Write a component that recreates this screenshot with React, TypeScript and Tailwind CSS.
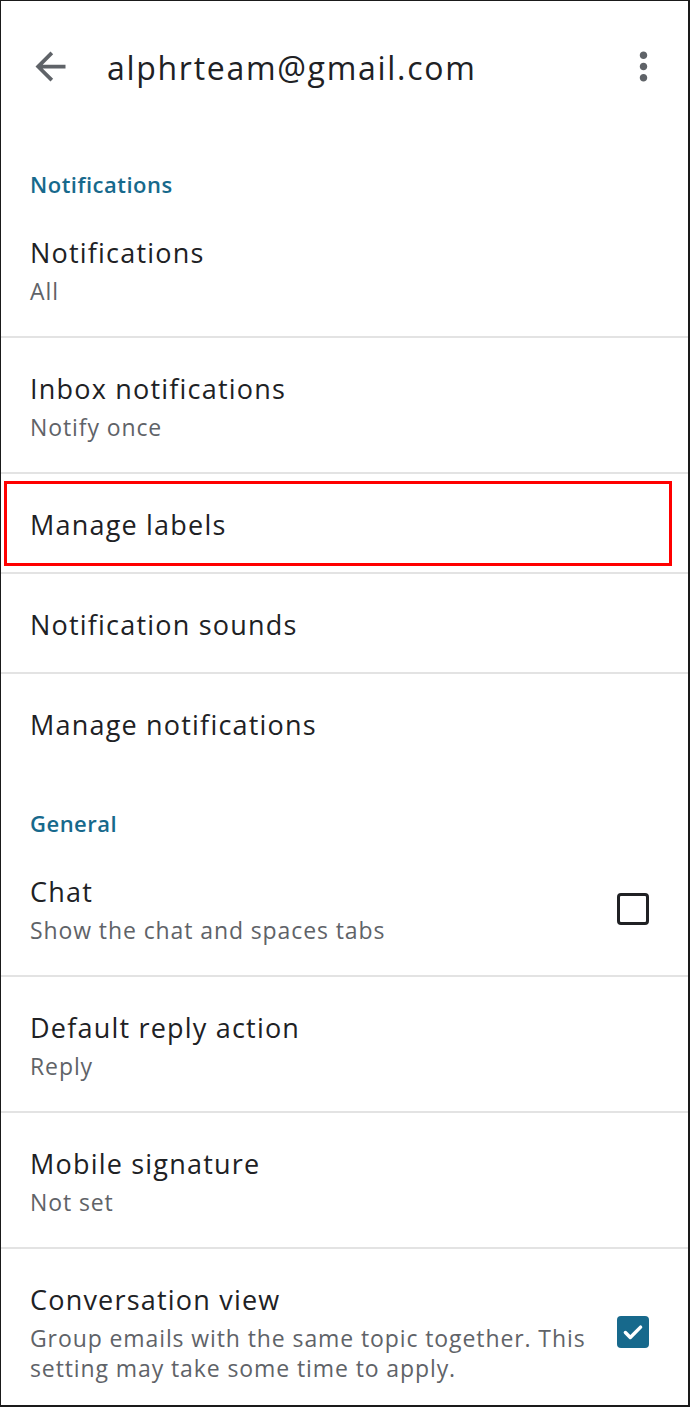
import React from 'react';

type Row = {
  title: string;
  subtitle?: string;
  checkbox?: 'on' | 'off';
  divider?: boolean;
  highlight?: boolean;
};

const notificationRows: Row[] = [
  { title: 'Notifications', subtitle: 'All', divider: true },
  { title: 'Inbox notifications', subtitle: 'Notify once', divider: true },
  { title: 'Manage labels', divider: true, highlight: true },
  { title: 'Notification sounds', divider: true },
  { title: 'Manage notifications' },
];

const generalRows: Row[] = [
  { title: 'Chat', subtitle: 'Show the chat and spaces tabs', checkbox: 'off', divider: true },
  { title: 'Default reply action', subtitle: 'Reply', divider: true },
  { title: 'Mobile signature', subtitle: 'Not set', divider: true },
  {
    title: 'Conversation view',
    subtitle: 'Group emails with the same topic together. This setting may take some time to apply.',
    checkbox: 'on',
  },
];

function Checkbox({ checked }: { checked: boolean }) {
  if (checked) {
    return (
      <div className="w-[32px] h-[32px] rounded-[4px] bg-[#17698c] flex items-center justify-center shrink-0">
        <svg viewBox="0 0 24 24" className="w-[26px] h-[26px]" fill="none" stroke="#fff" strokeWidth="3.2" strokeLinecap="round" strokeLinejoin="round">
          <path d="M5 12.5l4.5 4.5L19 7.5" />
        </svg>
      </div>
    );
  }
  return <div className="w-[32px] h-[32px] rounded-[4px] border-[3.5px] border-[#202124] shrink-0" />;
}

function SettingRow({ row }: { row: Row }) {
  return (
    <div className={`relative ${row.divider ? 'border-b-2 border-[#e3e3e3]' : ''}`}>
      <div className={`flex items-center pl-[29px] pr-[39px] pt-[31px] ${row.subtitle ? 'pb-[30px]' : 'pb-[27px]'}`}>
        <div className="flex-1 pr-[30px]">
          <div className="text-[27px] leading-[40px] tracking-[1.2px] text-[#202124]">{row.title}</div>
          {row.subtitle && (
            <div className="mt-[3px] text-[23px] leading-[30px] tracking-[0.9px] text-[#5f6368]">{row.subtitle}</div>
          )}
        </div>
        {row.checkbox && <Checkbox checked={row.checkbox === 'on'} />}
      </div>
      {/* annotation box */}
      {row.highlight && (
        <div className="absolute left-[3px] right-[16px] top-[7px] bottom-[6px] border-[3px] border-[#f00]" />
      )}
    </div>
  );
}

export default function App() {
  return (
    <div
      className="w-[690px] h-[1407px] bg-white border-t border-l border-r-2 border-b-2 border-[#1a1a1a] overflow-hidden"
      style={{ fontFamily: '"Open Sans", Roboto, sans-serif' }}
    >
      {/* Top bar */}
      <div className="h-[131px] flex items-center relative">
        <svg viewBox="0 0 24 24" className="absolute left-[27px] top-[43px] w-[45px] h-[45px]" fill="#5f6368">
          <path d="M20 11H7.83l5.59-5.59L12 4l-8 8 8 8 1.41-1.41L7.83 13H20v-2z" />
        </svg>
        <div className="ml-[106px] text-[32px] leading-[40px] tracking-[1.7px] text-[#202124] mt-[3px]">alphrteam@gmail.com</div>
        <svg viewBox="0 0 24 24" className="absolute left-[620px] top-[43px] w-[45px] h-[45px]" fill="#5f6368">
          <path d="M12 8c1.1 0 2-.9 2-2s-.9-2-2-2-2 .9-2 2 .9 2 2 2zm0 2c-1.1 0-2 .9-2 2s.9 2 2 2 2-.9 2-2-.9-2-2-2zm0 6c-1.1 0-2 .9-2 2s.9 2 2 2 2-.9 2-2-.9-2-2-2z" />
        </svg>
      </div>

      {/* Notifications section */}
      <div className="pl-[29px] pt-[37px] text-[22px] leading-[30px] tracking-[0.5px] font-semibold text-[#17698c]">Notifications</div>
      <div className="mt-[3px]">
        {notificationRows.map((r) => (
          <SettingRow key={r.title} row={r} />
        ))}
      </div>

      {/* General section */}
      <div className="pl-[29px] pt-[36px] text-[22px] leading-[30px] tracking-[0.5px] font-semibold text-[#17698c]">General</div>
      <div className="mt-[3px]">
        {generalRows.map((r) => (
          <SettingRow key={r.title} row={r} />
        ))}
      </div>
    </div>
  );
}
